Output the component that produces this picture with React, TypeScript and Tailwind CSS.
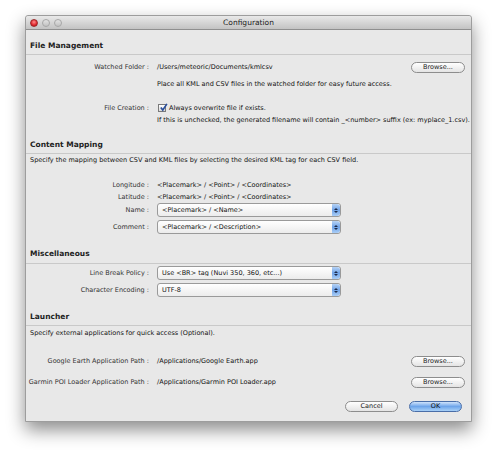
import React from "react";

const font = { fontFamily: '"DejaVu Sans", "Lucida Grande", sans-serif' };

function Header({ pt, pb = 2, children }: { pt: string; pb?: number; children: React.ReactNode }) {
  return (
    <div className={`${pt} ${pb === 3 ? "pb-[3px]" : "pb-[2px]"} border-b border-[#c9c9c9] pl-[4px]`}>
      <div className="h-[12px] leading-[12px] text-[7.5px] font-bold text-[#222]">{children}</div>
    </div>
  );
}

function Browse() {
  return (
    <div className="w-[54px] h-[11px] rounded-full border border-[#8d8d8d] bg-gradient-to-b from-white to-[#e4e4e4] flex items-center justify-center text-[6.5px] text-[#222] leading-none">
      Browse...
    </div>
  );
}

function Select({ text }: { text: string }) {
  return (
    <div className="w-[184px] h-[14px] rounded-[3px] border border-[#9a9a9a] bg-gradient-to-b from-white to-[#ececec] flex items-center">
      <div className="flex-1 pl-[4px] text-[6.5px] leading-none text-[#111] truncate">{text}</div>
      <div className="w-[8px] h-full rounded-r-[3px] bg-gradient-to-b from-[#b7d3f5] via-[#6fa3e8] to-[#a9cdf6] flex flex-col items-center justify-center gap-[1px]">
        <div className="w-0 h-0 border-l-[2px] border-r-[2px] border-b-[2px] border-l-transparent border-r-transparent border-b-[#1c2a4a]" />
        <div className="w-0 h-0 border-l-[2px] border-r-[2px] border-t-[2px] border-l-transparent border-r-transparent border-t-[#1c2a4a]" />
      </div>
    </div>
  );
}

function Row({ mt, label, h = "h-[12px]", children }: { mt: string; label?: string; h?: string; children?: React.ReactNode }) {
  return (
    <div className={`${mt} ${h} flex items-center`}>
      <div className="w-[123px] shrink-0 text-right text-[6.5px] leading-none text-[#333] whitespace-nowrap">{label ?? ""}</div>
      <div className="ml-[8px] flex-1 flex items-center text-[6.5px] leading-none text-[#111] whitespace-nowrap pr-[6px]">
        {children}
      </div>
    </div>
  );
}

export default function App() {
  return (
    <div className="w-[497px] h-[457px] bg-white pl-[25px] pt-[15px]" style={font}>
      <div className="w-[447px] h-[407px] bg-[#e8e8e8] border border-[#9d9d9d] shadow-[0_8px_18px_rgba(0,0,0,0.45)] flex flex-col rounded-t-[3px]">
        {/* Title bar */}
        <div className="h-[14px] shrink-0 relative flex items-center bg-gradient-to-b from-[#e9e9e9] to-[#c3c3c3] border-b border-[#8f8f8f] rounded-t-[3px]">
          <div className="flex items-center gap-[4px] pl-[4px]">
            <div className="w-[8px] h-[8px] rounded-full bg-[radial-gradient(circle_at_50%_35%,#ff8a8a,#e0262c_60%,#a30d12)] border border-[#9b2a2a]" />
            <div className="w-[8px] h-[8px] rounded-full bg-gradient-to-b from-[#e3e3e3] to-[#c2c2c2] border border-[#a7a7a7]" />
            <div className="w-[8px] h-[8px] rounded-full bg-gradient-to-b from-[#e3e3e3] to-[#c2c2c2] border border-[#a7a7a7]" />
          </div>
          <div className="absolute inset-0 flex items-center justify-center text-[7.5px] text-[#222]">Configuration</div>
        </div>

        <Header pt="pt-[10px]">File Management</Header>
        <Row mt="mt-[6px]" label="Watched Folder :">
          <span className="flex-1">/Users/meteoric/Documents/kmlcsv</span>
          <Browse />
        </Row>
        <Row mt="mt-[5px]">Place all KML and CSV files in the watched folder for easy future access.</Row>
        <Row mt="mt-[12px]" label="File Creation :">
          <div className="w-[8px] h-[8px] border border-[#7a7a7a] bg-gradient-to-b from-white to-[#dcdcdc] relative mr-[3px] ml-[1px]">
            <svg viewBox="0 0 10 10" className="absolute -top-[2px] left-0 w-[9px] h-[9px]">
              <path d="M2 5 L4.2 7.8 L8.8 1" fill="none" stroke="#2a4f9c" strokeWidth="1.8" />
            </svg>
          </div>
          Always overwrite file if exists.
        </Row>
        <Row mt="mt-0">If this is unchecked, the generated filename will contain _&lt;number&gt; suffix (ex: myplace_1.csv).</Row>

        <Header pt="pt-[13px]">Content Mapping</Header>
        <div className="h-[12px] flex items-center pl-[4px] text-[6.5px] leading-none text-[#111] whitespace-nowrap">
          Specify the mapping between CSV and KML files by selecting the desired KML tag for each CSV field.
        </div>
        <Row mt="mt-[13px]" label="Longitude :">&lt;Placemark&gt; / &lt;Point&gt; / &lt;Coordinates&gt;</Row>
        <Row mt="mt-0" label="Latitude :">&lt;Placemark&gt; / &lt;Point&gt; / &lt;Coordinates&gt;</Row>
        <Row mt="mt-0" h="h-[14px]" label="Name :">
          <Select text="<Placemark> / <Name>" />
        </Row>
        <Row mt="mt-[3px]" h="h-[14px]" label="Comment :">
          <Select text="<Placemark> / <Description>" />
        </Row>

        <Header pt="pt-[14px]" pb={3}>Miscellaneous</Header>
        <Row mt="mt-[2px]" h="h-[14px]" label="Line Break Policy :">
          <Select text="Use <BR> tag (Nuvi 350, 360, etc...)" />
        </Row>
        <Row mt="mt-[3px]" h="h-[14px]" label="Character Encoding :">
          <Select text="UTF-8" />
        </Row>

        <Header pt="pt-[14px]">Launcher</Header>
        <div className="mt-[1px] h-[12px] flex items-center pl-[4px] text-[6.5px] leading-none text-[#111] whitespace-nowrap">
          Specify external applications for quick access (Optional).
        </div>
        <Row mt="mt-[16px]" label="Google Earth Application Path :">
          <span className="flex-1">/Applications/Google Earth.app</span>
          <Browse />
        </Row>
        <Row mt="mt-[9px]" label="Garmin POI Loader Application Path :">
          <span className="flex-1">/Applications/Garmin POI Loader.app</span>
          <Browse />
        </Row>

        <div className="mt-[12px] h-[12px] flex items-center justify-end gap-[11px] pr-[9px]">
          <div className="w-[53px] h-[11px] rounded-full border border-[#8d8d8d] bg-gradient-to-b from-white to-[#e4e4e4] flex items-center justify-center text-[6.5px] text-[#222] leading-none">
            Cancel
          </div>
          <div className="w-[53px] h-[11px] rounded-full border border-[#4a6ea8] bg-gradient-to-b from-[#cfe3fb] via-[#6ea5ea] to-[#a8d0f7] flex items-center justify-center text-[6.5px] text-[#111] leading-none">
            OK
          </div>
        </div>
      </div>
    </div>
  );
}
